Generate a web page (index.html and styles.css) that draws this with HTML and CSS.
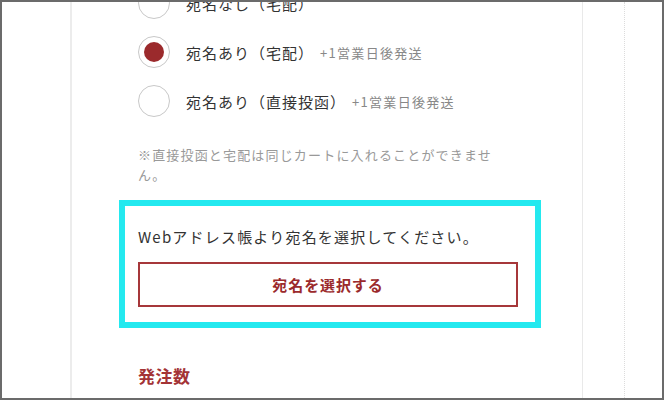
FILE: index.html
```html
<!DOCTYPE html>
<html lang="ja">
<head>
    <meta charset="UTF-8">
    <meta name="viewport" content="width=device-width, initial-scale=1.0">
    <title>宛名の選択</title>
    <link rel="stylesheet" href="styles.css">
</head>
<body>
    <div class="frame">
        <div class="side-left"></div>
        <main class="main">
            <!-- Delivery options -->
            <div class="radio-list">
                <label class="radio-row">
                    <span class="radio"></span>
                    <span class="radio-label">宛名なし（宅配）</span>
                </label>
                <label class="radio-row">
                    <span class="radio checked"></span>
                    <span class="radio-label">宛名あり（宅配）</span>
                    <span class="radio-note">+1営業日後発送</span>
                </label>
                <label class="radio-row">
                    <span class="radio"></span>
                    <span class="radio-label">宛名あり（直接投函）</span>
                    <span class="radio-note">+1営業日後発送</span>
                </label>
            </div>
            <p class="note">※直接投函と宅配は同じカートに入れることができません。</p>

            <!-- Address book -->
            <div class="highlight">
                <p class="address-text">Webアドレス帳より宛名を選択してください。</p>
                <button type="button" class="select-button">宛名を選択する</button>
            </div>

            <h2 class="section-title">発注数</h2>
        </main>
        <div class="side-right"></div>
        <div class="side-edge"></div>
    </div>
</body>
</html>
```

FILE: styles.css
```css
body {
    margin: 0;
    font-family: "Noto Sans CJK JP", "Noto Sans", sans-serif;
    background-color: #fff;
}
.frame {
    width: 664px;
    height: 400px;
    box-sizing: border-box;
    border: 2px solid #6b6b6b;
    display: flex;
    overflow: hidden;
    background: #fff;
}
.side-left {
    width: 68px;
    flex: none;
    border-right: 2px solid #ececec;
}
.main {
    width: 380px;
    flex: none;
    padding: 0 64px 0 66px;
    border-right: 1px solid #e9e9e9;
}
.side-right {
    width: 41px;
    flex: none;
    border-right: 1px dotted #dcdcdc;
}
.side-edge {
    flex: 1;
}
.radio-list {
    margin-top: -15px;
    display: flex;
    flex-direction: column;
    gap: 17px;
}
.radio-row {
    display: flex;
    align-items: center;
    height: 32px;
}
.radio {
    width: 32px;
    height: 32px;
    box-sizing: border-box;
    border: 1px solid #c8c8c8;
    border-radius: 50%;
    display: flex;
    align-items: center;
    justify-content: center;
    margin-right: 16px;
    flex: none;
}
.radio.checked::after {
    content: "";
    width: 20px;
    height: 20px;
    border-radius: 50%;
    background-color: #9b2a2c;
}
.radio-label {
    font-size: 15px;
    letter-spacing: 1px;
    color: #333;
}
.radio-note {
    font-size: 13px;
    letter-spacing: 0.1em;
    color: #888;
    margin-left: 6px;
}
.note {
    margin: 28px 0 0;
    font-size: 13px;
    line-height: 20px;
    letter-spacing: 0.09em;
    color: #999;
}
.highlight {
    margin: 15px -23px 0 -19px;
    border: 6px solid #24e9ef;
    padding: 19px 17px 15px 13px;
}
.address-text {
    margin: 0;
    font-size: 15px;
    line-height: 24px;
    letter-spacing: 0.08em;
    color: #333;
}
.select-button {
    display: block;
    width: 100%;
    height: 45px;
    margin-top: 13px;
    border: 2px solid #a6373a;
    background-color: #fff;
    color: #9b2a2c;
    font-family: inherit;
    font-size: 15px;
    font-weight: bold;
    letter-spacing: 0.06em;
    cursor: pointer;
}
.section-title {
    margin: 36px 0 0;
    font-size: 17px;
    line-height: 24px;
    font-weight: bold;
    letter-spacing: 0.03em;
    color: #a33336;
}
```
